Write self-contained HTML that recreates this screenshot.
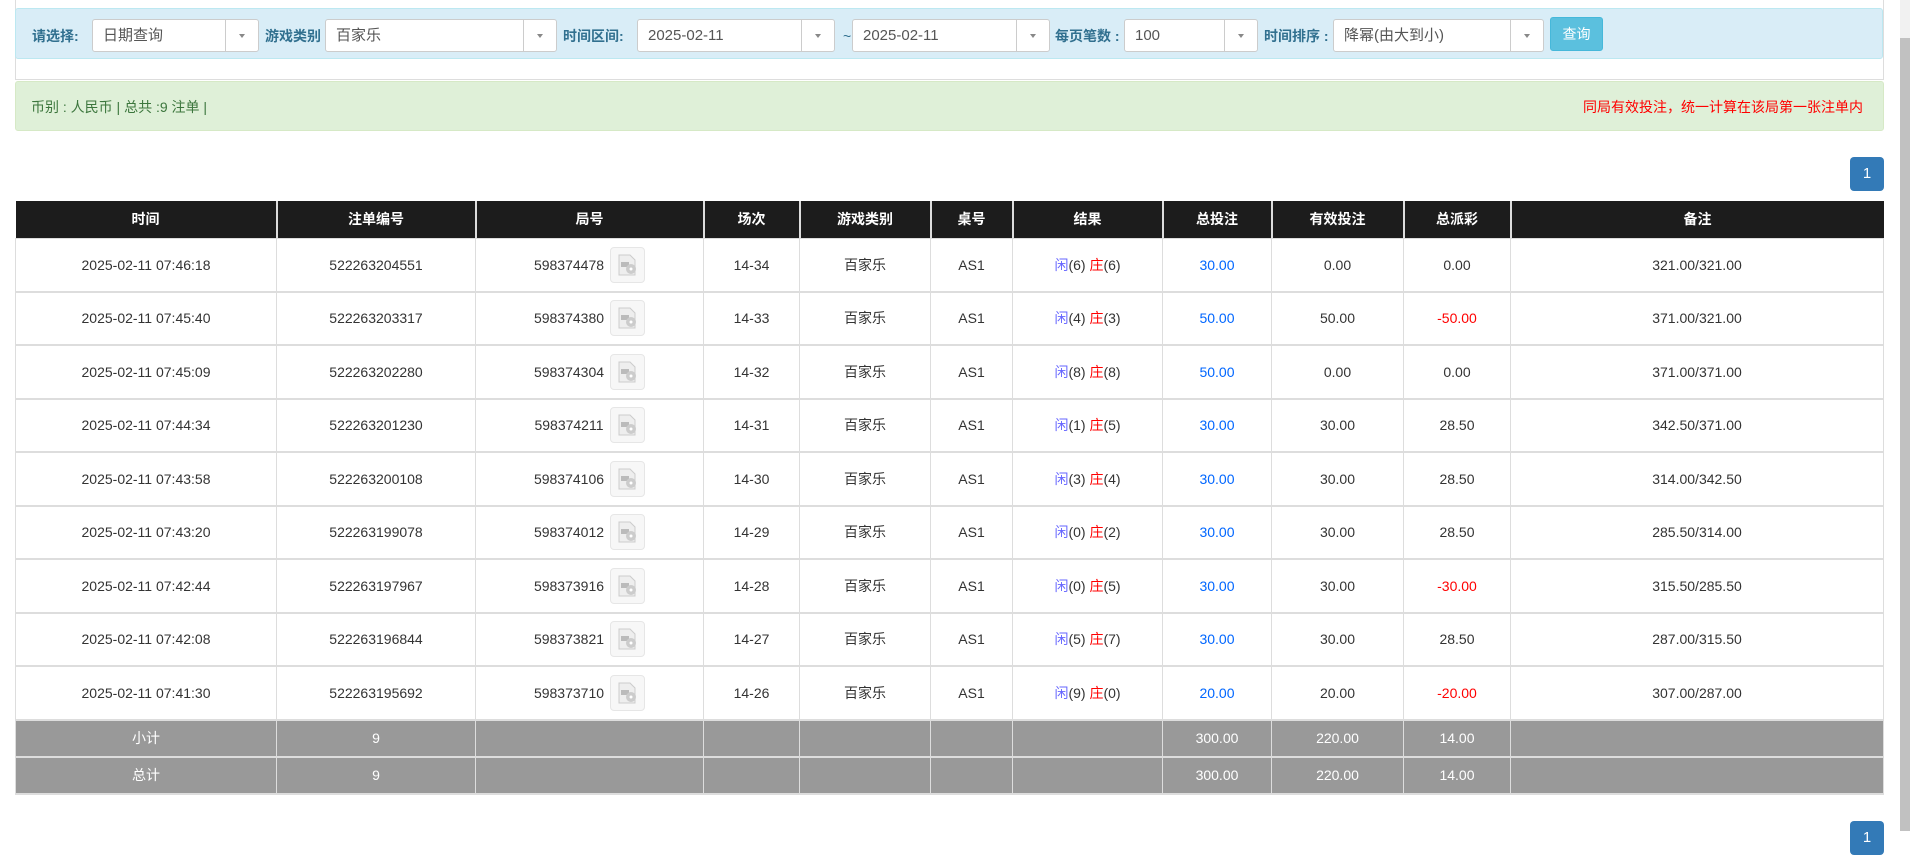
<!DOCTYPE html>
<html><head><meta charset="utf-8"><style>
*{box-sizing:border-box;margin:0;padding:0}
body{width:1910px;height:831px;overflow:hidden;background:#fff;font-family:"Liberation Sans","Noto Sans CJK SC",sans-serif;font-size:14px;color:#333;position:relative}
.abs{position:absolute}
.panel{left:15px;top:-2px;width:1869px;height:82px;border:1px solid #ddd;border-top:none}
.bar{left:15px;top:8px;width:1868px;height:51px;background:#d9edf7;border:1px solid #bce8f1;border-radius:3px}
.lbl{top:26px;font-weight:bold;color:#31708f;font-size:14px}
.sel{top:19px;height:33px;background:#fff;border:1px solid #ccc;border-radius:3px;font-size:15px;color:#555;line-height:31px;padding-left:10px}
.sel .dv{position:absolute;top:0;bottom:0;border-left:1px solid #ccc;width:33px;right:0}
.sel .dv:after{content:"";position:absolute;left:13px;top:14px;border:3px solid transparent;border-top:4px solid #888;border-bottom:none}
.btn{left:1550px;top:17px;width:53px;height:34px;background:#5bc0de;border:1px solid #46b8da;border-radius:3px;color:#fff;font-size:14px;text-align:center;line-height:32px}
.alert{left:15px;top:81px;width:1869px;height:50px;background:#dff0d8;border:1px solid #d6e9c6;border-radius:3px}
.pg{width:34px;height:34px;background:#337ab7;border-radius:4px;color:#fff;text-align:center;line-height:34px;font-size:15px}
table{position:absolute;left:15px;top:201px;width:1869px;border-collapse:collapse;table-layout:fixed}
th{background:#1c1c1c;color:#fff;font-weight:bold;height:37px;border-left:2px solid #ddd;font-size:14px}
td{height:53.5px;text-align:center;border:1px solid #ddd;border-bottom:2px solid #ddd;vertical-align:middle}
th:first-child{border-left:none}
tr.s td{background:#999;color:#fff;height:37px;border-color:#ddd}
.b{color:#06f}.r{color:#f00}.p{color:#66f}
.ic{display:inline-block;width:35px;height:36px;border:1px solid #e6e6e6;border-radius:4px;background:#f7f7f7;vertical-align:middle;margin-left:6px;position:relative}
.ic svg{position:absolute;left:5px;top:5px}
</style></head><body>
<div class="abs panel"></div>
<div class="abs bar"></div>
<div class="abs lbl" style="left:32px">请选择:</div>
<div class="abs sel" style="left:92px;width:167px">日期查询<div class="dv"></div></div>
<div class="abs lbl" style="left:265px">游戏类别</div>
<div class="abs sel" style="left:325px;width:232px">百家乐<div class="dv"></div></div>
<div class="abs lbl" style="left:563px">时间区间:</div>
<div class="abs sel" style="left:637px;width:198px">2025-02-11<div class="dv"></div></div>
<div class="abs" style="left:843px;top:28px;color:#31708f">~</div>
<div class="abs sel" style="left:852px;width:198px">2025-02-11<div class="dv"></div></div>
<div class="abs lbl" style="left:1055px">每页笔数 :</div>
<div class="abs sel" style="left:1124px;width:134px">100<div class="dv"></div></div>
<div class="abs lbl" style="left:1264px">时间排序 :</div>
<div class="abs sel" style="left:1333px;width:211px">降幂(由大到小)<div class="dv"></div></div>
<div class="abs btn">查询</div>
<div class="abs alert"></div>
<div class="abs" style="left:31px;top:97px;color:#3c763d">币别 : 人民币 | 总共 :9 注单 |</div>
<div class="abs" style="right:47px;top:97px;color:#f00">同局有效投注，统一计算在该局第一张注单内</div>
<div class="abs pg" style="left:1850px;top:157px">1</div>
<div class="abs pg" style="left:1850px;top:821px">1</div>
<div class="abs" style="left:1900px;top:0;width:10px;height:38px;background:#f1f1f1"></div>
<div class="abs" style="left:1900px;top:38px;width:10px;height:793px;background:#c1c1c1"></div>
<table>
<colgroup><col style="width:261px"><col style="width:199px"><col style="width:228px"><col style="width:96px"><col style="width:131px"><col style="width:82px"><col style="width:150px"><col style="width:109px"><col style="width:132px"><col style="width:107px"><col></colgroup>
<tr><th>时间</th><th>注单编号</th><th>局号</th><th>场次</th><th>游戏类别</th><th>桌号</th><th>结果</th><th>总投注</th><th>有效投注</th><th>总派彩</th><th>备注</th></tr>
<tr><td>2025-02-11 07:46:18</td><td>522263204551</td><td><span style="vertical-align:middle">598374478</span><span class="ic"><svg width="24" height="24"><path d="M3 2h11l5 5v15H3z" fill="#eee" stroke="#ccc"/><rect x="5" y="9" width="8" height="5" fill="#bbb"/><circle cx="15" cy="16" r="5" fill="#ccc"/><circle cx="15" cy="16" r="1.5" fill="#fff"/></svg></span></td><td>14-34</td><td>百家乐</td><td>AS1</td><td><span class="p">闲</span>(6) <span class="r">庄</span>(6)</td><td class="b">30.00</td><td>0.00</td><td>0.00</td><td>321.00/321.00</td></tr>
<tr><td>2025-02-11 07:45:40</td><td>522263203317</td><td><span style="vertical-align:middle">598374380</span><span class="ic"><svg width="24" height="24"><path d="M3 2h11l5 5v15H3z" fill="#eee" stroke="#ccc"/><rect x="5" y="9" width="8" height="5" fill="#bbb"/><circle cx="15" cy="16" r="5" fill="#ccc"/><circle cx="15" cy="16" r="1.5" fill="#fff"/></svg></span></td><td>14-33</td><td>百家乐</td><td>AS1</td><td><span class="p">闲</span>(4) <span class="r">庄</span>(3)</td><td class="b">50.00</td><td>50.00</td><td class="r">-50.00</td><td>371.00/321.00</td></tr>
<tr><td>2025-02-11 07:45:09</td><td>522263202280</td><td><span style="vertical-align:middle">598374304</span><span class="ic"><svg width="24" height="24"><path d="M3 2h11l5 5v15H3z" fill="#eee" stroke="#ccc"/><rect x="5" y="9" width="8" height="5" fill="#bbb"/><circle cx="15" cy="16" r="5" fill="#ccc"/><circle cx="15" cy="16" r="1.5" fill="#fff"/></svg></span></td><td>14-32</td><td>百家乐</td><td>AS1</td><td><span class="p">闲</span>(8) <span class="r">庄</span>(8)</td><td class="b">50.00</td><td>0.00</td><td>0.00</td><td>371.00/371.00</td></tr>
<tr><td>2025-02-11 07:44:34</td><td>522263201230</td><td><span style="vertical-align:middle">598374211</span><span class="ic"><svg width="24" height="24"><path d="M3 2h11l5 5v15H3z" fill="#eee" stroke="#ccc"/><rect x="5" y="9" width="8" height="5" fill="#bbb"/><circle cx="15" cy="16" r="5" fill="#ccc"/><circle cx="15" cy="16" r="1.5" fill="#fff"/></svg></span></td><td>14-31</td><td>百家乐</td><td>AS1</td><td><span class="p">闲</span>(1) <span class="r">庄</span>(5)</td><td class="b">30.00</td><td>30.00</td><td>28.50</td><td>342.50/371.00</td></tr>
<tr><td>2025-02-11 07:43:58</td><td>522263200108</td><td><span style="vertical-align:middle">598374106</span><span class="ic"><svg width="24" height="24"><path d="M3 2h11l5 5v15H3z" fill="#eee" stroke="#ccc"/><rect x="5" y="9" width="8" height="5" fill="#bbb"/><circle cx="15" cy="16" r="5" fill="#ccc"/><circle cx="15" cy="16" r="1.5" fill="#fff"/></svg></span></td><td>14-30</td><td>百家乐</td><td>AS1</td><td><span class="p">闲</span>(3) <span class="r">庄</span>(4)</td><td class="b">30.00</td><td>30.00</td><td>28.50</td><td>314.00/342.50</td></tr>
<tr><td>2025-02-11 07:43:20</td><td>522263199078</td><td><span style="vertical-align:middle">598374012</span><span class="ic"><svg width="24" height="24"><path d="M3 2h11l5 5v15H3z" fill="#eee" stroke="#ccc"/><rect x="5" y="9" width="8" height="5" fill="#bbb"/><circle cx="15" cy="16" r="5" fill="#ccc"/><circle cx="15" cy="16" r="1.5" fill="#fff"/></svg></span></td><td>14-29</td><td>百家乐</td><td>AS1</td><td><span class="p">闲</span>(0) <span class="r">庄</span>(2)</td><td class="b">30.00</td><td>30.00</td><td>28.50</td><td>285.50/314.00</td></tr>
<tr><td>2025-02-11 07:42:44</td><td>522263197967</td><td><span style="vertical-align:middle">598373916</span><span class="ic"><svg width="24" height="24"><path d="M3 2h11l5 5v15H3z" fill="#eee" stroke="#ccc"/><rect x="5" y="9" width="8" height="5" fill="#bbb"/><circle cx="15" cy="16" r="5" fill="#ccc"/><circle cx="15" cy="16" r="1.5" fill="#fff"/></svg></span></td><td>14-28</td><td>百家乐</td><td>AS1</td><td><span class="p">闲</span>(0) <span class="r">庄</span>(5)</td><td class="b">30.00</td><td>30.00</td><td class="r">-30.00</td><td>315.50/285.50</td></tr>
<tr><td>2025-02-11 07:42:08</td><td>522263196844</td><td><span style="vertical-align:middle">598373821</span><span class="ic"><svg width="24" height="24"><path d="M3 2h11l5 5v15H3z" fill="#eee" stroke="#ccc"/><rect x="5" y="9" width="8" height="5" fill="#bbb"/><circle cx="15" cy="16" r="5" fill="#ccc"/><circle cx="15" cy="16" r="1.5" fill="#fff"/></svg></span></td><td>14-27</td><td>百家乐</td><td>AS1</td><td><span class="p">闲</span>(5) <span class="r">庄</span>(7)</td><td class="b">30.00</td><td>30.00</td><td>28.50</td><td>287.00/315.50</td></tr>
<tr><td>2025-02-11 07:41:30</td><td>522263195692</td><td><span style="vertical-align:middle">598373710</span><span class="ic"><svg width="24" height="24"><path d="M3 2h11l5 5v15H3z" fill="#eee" stroke="#ccc"/><rect x="5" y="9" width="8" height="5" fill="#bbb"/><circle cx="15" cy="16" r="5" fill="#ccc"/><circle cx="15" cy="16" r="1.5" fill="#fff"/></svg></span></td><td>14-26</td><td>百家乐</td><td>AS1</td><td><span class="p">闲</span>(9) <span class="r">庄</span>(0)</td><td class="b">20.00</td><td>20.00</td><td class="r">-20.00</td><td>307.00/287.00</td></tr>
<tr class="s"><td>小计</td><td>9</td><td></td><td></td><td></td><td></td><td></td><td>300.00</td><td>220.00</td><td>14.00</td><td></td></tr>
<tr class="s"><td>总计</td><td>9</td><td></td><td></td><td></td><td></td><td></td><td>300.00</td><td>220.00</td><td>14.00</td><td></td></tr>
</table>
</body></html>
